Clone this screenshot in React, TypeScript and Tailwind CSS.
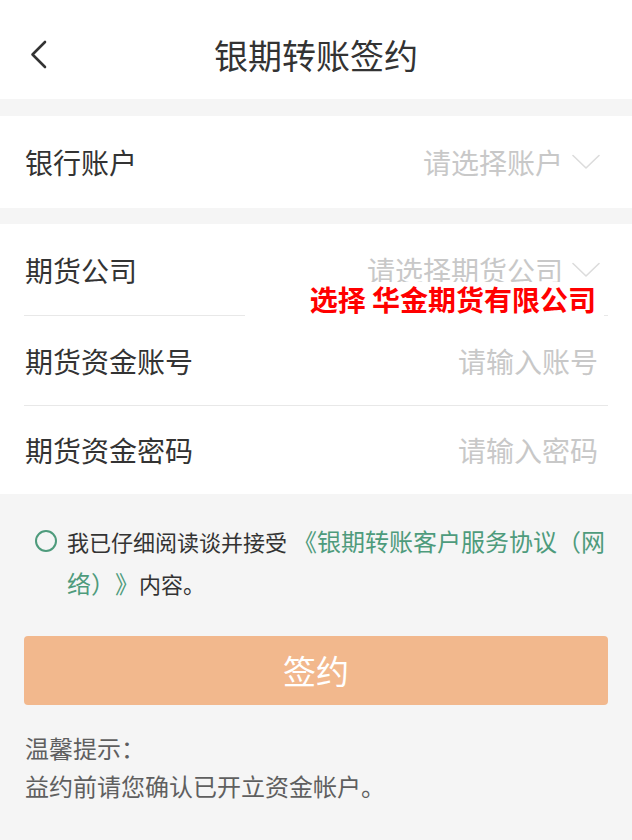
import React from "react";

const FONT = "font-['Noto_Sans_CJK_SC','Noto_Sans',sans-serif]";

function BackIcon() {
  return (
    <svg width="20" height="30" viewBox="0 0 20 30" fill="none">
      <path d="M15 2 L2.5 14.5 L15 27" stroke="#333333" strokeWidth="2.6" strokeLinecap="round" strokeLinejoin="round" />
    </svg>
  );
}

function ChevronDown() {
  return (
    <svg width="28" height="16" viewBox="0 0 28 16" fill="none">
      <path d="M1 1.5 L14 14 L27 1.5" stroke="#dcdcdc" strokeWidth="1.6" strokeLinecap="round" strokeLinejoin="round" />
    </svg>
  );
}

function FormRow({
  label,
  placeholder,
  select,
  divider,
  className,
  children,
}: {
  label: string;
  placeholder: string;
  select?: boolean;
  divider?: boolean;
  className?: string;
  children?: React.ReactNode;
}) {
  return (
    <div className={"relative " + (className ?? "")}>
      <div className={"flex h-full items-center justify-between pl-[25px] " + (select ? "pr-[32px]" : "pr-[34px]")}>
        <span className="text-[28px] leading-none text-[#333333]">{label}</span>
        <div className="flex items-center gap-[9px]">
          <span className="text-[28px] leading-none text-[#c8c8c8]">{placeholder}</span>
          {select && <ChevronDown />}
        </div>
      </div>
      {divider && <div className="absolute bottom-0 left-[24px] right-[24px] h-px bg-[#e8e8e8]" />}
      {children}
    </div>
  );
}

export default function App() {
  return (
    <div className={"w-[632px] min-h-[840px] bg-[#f5f5f5] " + FONT}>
      {/* 标题栏 */}
      <div className="relative flex h-[99px] items-center justify-center bg-white pt-[10px]">
        <div className="absolute left-[30px] top-[40px]">
          <BackIcon />
        </div>
        <h1 className="text-[34px] leading-none text-[#333333]">银期转账签约</h1>
      </div>

      {/* 银行账户 */}
      <div className="mt-[17px] bg-white">
        <FormRow label="银行账户" placeholder="请选择账户" select className="h-[92px]" />
      </div>

      {/* 期货信息 */}
      <div className="mt-[16px] bg-white">
        <FormRow label="期货公司" placeholder="请选择期货公司" select divider className="h-[92px]">
          <div className="absolute left-[245px] top-[58px] flex h-[34px] w-[359px] items-center justify-end bg-white pr-[8px]">
            <span className="text-[28px] font-bold leading-none text-[#ff0000]">选择 华金期货有限公司</span>
          </div>
        </FormRow>
        <FormRow label="期货资金账号" placeholder="请输入账号" divider className="h-[90px]" />
        <FormRow label="期货资金密码" placeholder="请输入密码" className="h-[88px]" />
      </div>

      {/* 协议 */}
      <div className="flex pl-[35px] pr-[18px] pt-[26px]">
        <div className="mt-[10px] h-[22px] w-[22px] shrink-0 rounded-full border-2 border-[#4e9b7c]" />
        <p className="ml-[10px] text-[22px] leading-[42px] text-[#333333] [text-spacing-trim:space-all]">
          我已仔细阅读谈并接受<span className="ml-[6px] text-[24px] text-[#4e9b7c]">《银期转账客户服务协议（网络）》</span>内容。
        </p>
      </div>

      {/* 签约按钮 */}
      <div className="px-[24px] pt-[32px]">
        <button className="flex h-[69px] w-full items-center justify-center rounded-[4px] bg-[#f2b88d] text-[33px] leading-none text-white">
          签约
        </button>
      </div>

      {/* 温馨提示 */}
      <div className="px-[25px] pt-[24px] text-[24px] leading-[38px] text-[#5f5f5f]">
        <p>温馨提示：</p>
        <p>益约前请您确认已开立资金帐户。</p>
      </div>
    </div>
  );
}
